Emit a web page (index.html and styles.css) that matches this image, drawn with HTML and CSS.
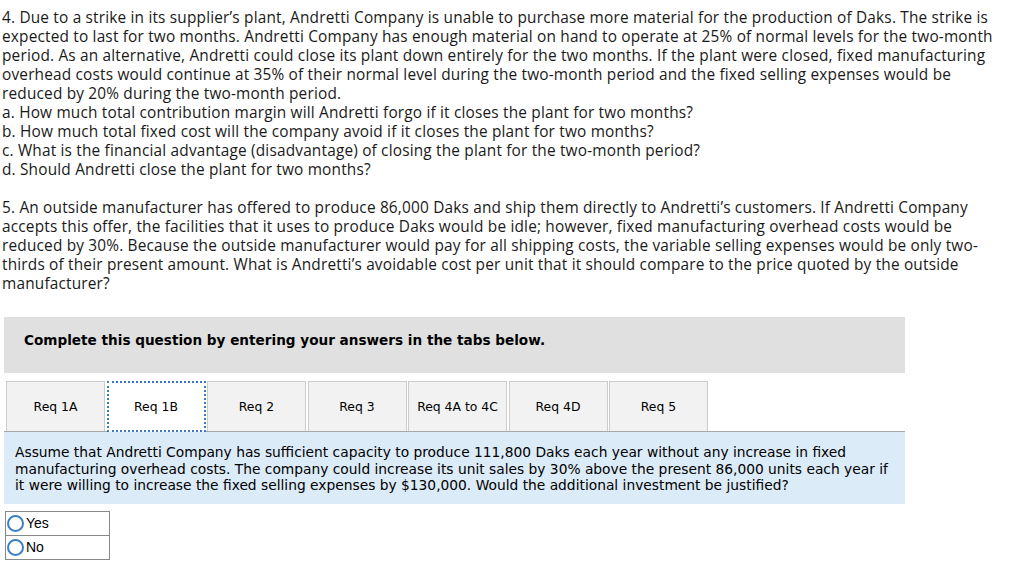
FILE: index.html
```html
<!DOCTYPE html>
<html>
<head>
<meta charset="utf-8">
<link rel="stylesheet" href="styles.css">
</head>
<body>
<div class="problem">
<p>4. Due to a strike in its supplier’s plant, Andretti Company is unable to purchase more material for the production of Daks. The strike is expected to last for two months. Andretti Company has enough material on hand to operate at 25% of normal levels for the two-month period. As an alternative, Andretti could close its plant down entirely for the two months. If the plant were closed, fixed manufacturing overhead costs would continue at 35% of their normal level during the two-month period and the fixed selling expenses would be reduced by 20% during the two-month period.<br>a. How much total contribution margin will Andretti forgo if it closes the plant for two months?<br>b. How much total fixed cost will the company avoid if it closes the plant for two months?<br>c. What is the financial advantage (disadvantage) of closing the plant for the two-month period?<br>d. Should Andretti close the plant for two months?</p>
<p>5. An outside manufacturer has offered to produce 86,000 Daks and ship them directly to Andretti’s customers. If Andretti Company accepts this offer, the facilities that it uses to produce Daks would be idle; however, fixed manufacturing overhead costs would be reduced by 30%. Because the outside manufacturer would pay for all shipping costs, the variable selling expenses would be only two-thirds of their present amount. What is Andretti’s avoidable cost per unit that it should compare to the price quoted by the outside manufacturer?</p>
</div>
<div class="widget">
  <div class="banner">Complete this question by entering your answers in the tabs below.</div>
  <div class="tabs">
    <div class="tab">Req 1A</div>
    <div class="tab active">Req 1B</div>
    <div class="tab">Req 2</div>
    <div class="tab">Req 3</div>
    <div class="tab">Req 4A to 4C</div>
    <div class="tab">Req 4D</div>
    <div class="tab">Req 5</div>
  </div>
  <div class="prompt">Assume that Andretti Company has sufficient capacity to produce 111,800 Daks each year without any increase in fixed manufacturing overhead costs. The company could increase its unit sales by 30% above the present 86,000 units each year if it were willing to increase the fixed selling expenses by $130,000. Would the additional investment be justified?</div>
  <div class="choices">
    <div class="choice"><span class="radio"></span>Yes</div>
    <div class="choice"><span class="radio"></span>No</div>
  </div>
</div>
</body>
</html>
```
FILE: styles.css
```css
html, body { margin: 0; padding: 0; background: #fff; }
body { padding: 8px 0 0 2px; }
.problem {
  font-family: "Open Sans", "Liberation Sans", sans-serif;
  font-size: 15.4px;
  letter-spacing: 0.18px;
  line-height: 19px;
  color: #1a1a1a;
  width: 996px;
}
.problem p { margin: 0 0 19px 0; }
.problem p:last-child { margin-bottom: 0; }
.widget { width: 901px; margin: 24px 0 0 2px; }
.banner {
  background: #e0e0e0;
  height: 56px;
  box-sizing: border-box;
  padding: 15px 0 0 20px;
  font-family: Verdana, "DejaVu Sans", sans-serif;
  font-weight: bold;
  font-size: 13.6px;
  color: #000;
}
.tabs {
  display: flex;
  gap: 1.5px;
  padding: 8px 0 0 2px;
  border-bottom: 1px solid #a8a8a8;
}
.tab {
  width: 99px;
  height: 50px;
  box-sizing: border-box;
  background: #f2f2f2;
  border: 1px solid #cccccc;
  border-bottom: none;
  display: flex;
  align-items: center;
  justify-content: center;
  font-family: Verdana, "DejaVu Sans", sans-serif;
  font-size: 12.4px;
  color: #000;
}
.tab.active {
  background: #fff;
  border: 2px dotted #3a78c0;
  margin-bottom: -1px;
  height: 51px;
}
.prompt {
  background: #dcebf8;
  padding: 12px 14px 10px 11px;
  font-family: Verdana, "DejaVu Sans", sans-serif;
  font-size: 13.8px;
  line-height: 16.5px;
  color: #000;
}
.choices {
  margin: 7px 0 0 1px;
  width: 105px;
  border: 1px solid #888;
  box-sizing: border-box;
}
.choice {
  height: 23px;
  display: flex;
  align-items: center;
  font-family: Arial, "Liberation Sans", sans-serif;
  font-size: 14px;
  color: #000;
}
.choice + .choice { border-top: 1px solid #888; }
.radio {
  width: 17px;
  height: 17px;
  box-sizing: border-box;
  border: 2px solid #3e7fc4;
  border-radius: 50%;
  margin: 0 2px 0 1px;
}
```
